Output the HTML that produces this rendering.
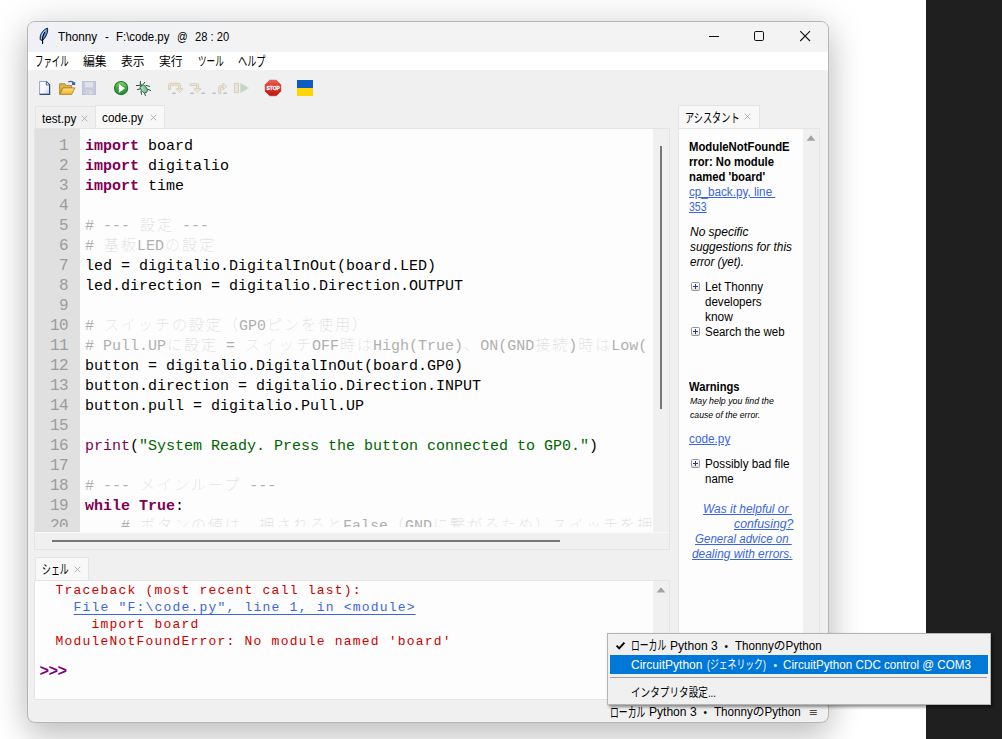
<!DOCTYPE html>
<html lang="ja">
<head>
<meta charset="utf-8">
<title>Thonny - F:\code.py @ 28 : 20</title>
<style>
html,body{margin:0;padding:0;}
body{width:1002px;height:739px;overflow:hidden;background:#fff;position:relative;
  font-family:"Liberation Sans","Noto Sans CJK JP",sans-serif;font-size:12px;color:#000;}
div,span,svg{position:absolute;}
span{white-space:pre;transform-origin:0 0;line-height:16px;}
span span,span i,span b{position:static;}
.dark{left:926px;top:0;width:76px;height:739px;background:#1f1f1f;}
.win{left:27px;top:21px;width:802px;height:702px;box-sizing:border-box;border:1px solid #b6b6b6;border-radius:8px;background:#f0f0f0;
  box-shadow:0 16px 30px rgba(0,0,0,.16),0 1px 38px rgba(0,0,0,.15);}
.title{left:28px;top:22px;width:800px;height:30px;border-radius:7px 7px 0 0;background:linear-gradient(90deg,#eff1f6,#f3f3f3 32%);}
.menu{left:28px;top:52px;width:800px;height:18px;background:#fff;}
.mono{font-family:"Liberation Mono","Noto Sans CJK JP",monospace;}
.c{font-family:"Liberation Mono","Noto Sans CJK JP",monospace;font-size:15px;line-height:20px;color:#000;}
.ln{font-family:"Liberation Mono",monospace;font-size:16px;letter-spacing:-0.6px;line-height:20px;width:33px;text-align:right;color:#9c9c9c;}
.kw{color:#7f0055;font-weight:bold;}
.bi{color:#7f0055;}
.str{color:#006400;}
.cm{color:#b0b0b0;}
.cj{color:#d9d9d9;font-weight:100;font-size:15px;letter-spacing:2px;padding-left:1px;margin-right:-1px;}
.s{font-family:"Liberation Mono",monospace;font-size:13px;letter-spacing:1.2px;line-height:17px;color:#cc0000;}
.s .lnk{text-underline-offset:3px;text-decoration-thickness:1px;}
.lnk{color:#3a66dd;text-decoration:underline;}
.i{font-style:italic;}
.b{font-weight:bold;}
</style>
</head>
<body>
<div class="dark"></div>
<div class="win"></div>
<div class="title"></div>
<div class="menu"></div>
<svg style="left:38px;top:27px" width="13" height="18" viewBox="0 0 13 18">
<path d="M9.3 1.1 C6.4 2.2 3.2 5.6 2.4 8.6 L2.1 12.5 L4.2 13.7 C6.4 12 8.6 8.4 9.4 5.4 C9.8 3.8 9.8 2.2 9.3 1.1 Z" fill="#4f92e8" stroke="#1a1f2c" stroke-width="1" stroke-linejoin="round"/>
<path d="M8.4 2.2 C6.2 3.4 3.6 6.4 3.1 8.8 L2.9 12 L4.4 12.2 L4.9 9.6 C5.6 7.2 7 4.6 8.4 2.2 Z" fill="#9ccafa"/>
<path d="M4.6 16.4 V10.4 C5 8.6 5.8 7 6.6 5.6" stroke="#000" stroke-width="1.1" fill="none" stroke-linecap="round"/>
</svg>
<svg style="left:700px;top:26px" width="120" height="20" viewBox="0 0 120 20" fill="none" stroke="#111" stroke-width="1">
<path d="M9 10.5 H19"/>
<rect x="54.5" y="5.5" width="9" height="9" rx="1.3"/>
<path d="M100.2 5.2 L110 15 M110 5.2 L100.2 15" stroke-width="1.1"/>
</svg>
<svg style="left:28px;top:74px" width="300" height="28" viewBox="28 74 300 28">
<defs>
<linearGradient id="gNew" x1="0" y1="0" x2="1" y2="1"><stop offset="0" stop-color="#ffffff"/><stop offset=".55" stop-color="#f6f8fd"/><stop offset="1" stop-color="#b9c8e6"/></linearGradient>
<linearGradient id="gFold" x1="0" y1="0" x2="0" y2="1"><stop offset="0" stop-color="#fde486"/><stop offset="1" stop-color="#efb02a"/></linearGradient>
<linearGradient id="gRun" x1="0" y1="0" x2="0" y2="1"><stop offset="0" stop-color="#8ed468"/><stop offset=".5" stop-color="#3fa045"/><stop offset="1" stop-color="#2c8f3a"/></linearGradient>
<linearGradient id="gBug" x1="0" y1="0" x2="1" y2="1"><stop offset="0" stop-color="#d2ecc8"/><stop offset="1" stop-color="#6aac66"/></linearGradient>
<linearGradient id="gStop" x1="0" y1="0" x2="0" y2="1"><stop offset="0" stop-color="#f0625a"/><stop offset=".5" stop-color="#d9281e"/><stop offset="1" stop-color="#c01a12"/></linearGradient>
</defs>
<!-- new -->
<path d="M39.6 81.5 H46.4 L49.6 84.7 V94.4 H39.6 Z" fill="url(#gNew)" stroke="#7f9bd0" stroke-width="0.9"/>
<path d="M46.4 81.6 L49.6 84.8 V94.4 H39.8" fill="none" stroke="#2c4877" stroke-width="1.2"/>
<path d="M46.3 81.8 V85 H49.4" fill="#e9eefa" stroke="#2c4877" stroke-width="0.8"/>
<!-- open -->
<path d="M59.6 94.3 V83.8 H65 L66.2 85.4 H71.6 V88.2 H62.4 Z" fill="#e3b347" stroke="#a98330" stroke-width="0.9"/>
<path d="M60 94.4 L63 87.9 H74.9 L71.6 94.4 Z" fill="url(#gFold)" stroke="#b08428" stroke-width="0.9"/>
<path d="M68.2 82 C69.8 81.2 72.2 81.2 73.6 82.6" fill="none" stroke="#3b64a8" stroke-width="1.2"/>
<path d="M72 82.2 H75.2 V85 H72 Z" fill="#3b64a8"/>
<!-- save (disabled) -->
<rect x="82.5" y="81.5" width="13" height="13" fill="#c7c9e0" stroke="#bfc1da" stroke-width="1"/>
<rect x="85" y="82.2" width="8" height="5.2" fill="#e2e2e6"/>
<rect x="86" y="90.4" width="6.4" height="4" fill="#d9dae6"/>
<rect x="87" y="91.2" width="2" height="2.4" fill="#c0c2d8"/>
<!-- run -->
<circle cx="121.1" cy="88.05" r="6.6" fill="url(#gRun)" stroke="#1d7a33" stroke-width="1.1"/>
<path d="M118.9 83.9 L125 88.3 L118.9 92.8 Z" fill="#fff"/>
<!-- debug bug -->
<g stroke="#23533a" stroke-width="1" fill="none" stroke-linecap="round">
<path d="M140.3 84.6 L140.4 81.4 M143.4 84.2 L144.6 82.4 M139.6 85.5 H136.4 M140.6 88.7 L137.4 89.6 M146 85.4 L149.5 86.4 M147.8 89.2 L150.7 90.6 M141 91.2 L141.5 94.3 M144.4 93 L145.4 95.5"/>
</g>
<ellipse cx="143.8" cy="88.9" rx="2.9" ry="4.5" transform="rotate(-38 143.8 88.9)" fill="url(#gBug)" stroke="#1f6a7a" stroke-width="0.9"/>
<circle cx="140.9" cy="85.4" r="1.2" fill="#4a9a58" stroke="#1f6a7a" stroke-width="0.6"/>
<!-- step icons -->
<g fill="none" stroke-linecap="round" stroke-linejoin="round">
<g stroke="#d7ccb3" stroke-width="3">
<path d="M169.5 88.8 V86.4 C169.5 85 170.4 84.3 171.6 84.3 H177.2 C178.8 84.3 179.6 85.2 179.6 86.6 V89"/>
<path d="M191 84.4 H196 C197.2 84.4 197.6 85 197.6 86.2 V89"/>
<path d="M219.8 92.4 V88 C219.8 86.9 220.4 86.4 221.4 86.4 H223.6"/>
</g>
<g stroke="#ece8dd" stroke-width="1.1">
<path d="M169.5 88.8 V86.4 C169.5 85 170.4 84.3 171.6 84.3 H177.2 C178.8 84.3 179.6 85.2 179.6 86.6 V89"/>
<path d="M191 84.4 H196 C197.2 84.4 197.6 85 197.6 86.2 V89"/>
<path d="M219.8 92.4 V88 C219.8 86.9 220.4 86.4 221.4 86.4 H223.6"/>
</g>
</g>
<g fill="#ece8dd" stroke="#d7ccb3" stroke-width="0.9" stroke-linejoin="round">
<path d="M176.2 88.8 H183 L179.6 92.6 Z"/>
<path d="M194 88.8 H201 L197.5 92.6 Z"/>
<path d="M223 83 L226.8 86.4 L223 89.8 Z"/>
</g>
<g fill="#b9c0cc">
<path d="M171.8 94 a2.1 1.8 0 0 1 4.2 0 Z"/>
<path d="M190 94 a2.1 1.8 0 0 1 4.2 0 Z M201 94 a2.1 1.8 0 0 1 4.2 0 Z"/>
<path d="M212 94 a2.1 1.8 0 0 1 4.2 0 Z M223 94 a2.1 1.8 0 0 1 4.2 0 Z"/>
</g>
<!-- resume -->
<rect x="234.4" y="83.4" width="4" height="9.2" fill="#e9e4d6" stroke="#d7ccb3" stroke-width="0.9"/>
<path d="M240.3 83 L249.2 88 L240.3 93 Z" fill="#c4d6c6"/>
<!-- stop -->
<path d="M269.7 80.2 H276.3 L280.8 84.7 V91.3 L276.3 95.8 H269.7 L265.2 91.3 V84.7 Z" fill="url(#gStop)" stroke="#b01c14" stroke-width="0.5"/>
<text x="273.1" y="90.1" font-family="Liberation Sans, sans-serif" font-weight="bold" font-size="6" fill="#fff" stroke="#fff" stroke-width="0.35" text-anchor="middle" textLength="13.4" lengthAdjust="spacingAndGlyphs">STOP</text>
<!-- flag -->
<rect x="297" y="80" width="16" height="8" fill="#0f5bc4"/>
<rect x="297" y="88" width="16" height="8" fill="#ffd500"/>
</svg>
<div style="left:35px;top:106px;width:61px;height:23px;background:#f0f0f0;box-sizing:border-box;border:1px solid #e4e4e4;border-bottom:none;"></div>
<div style="left:95px;top:105px;width:70px;height:24px;background:#f8f8f8;box-sizing:border-box;border:1px solid #e4e4e4;border-bottom:none;"></div>
<svg style="left:81px;top:115px" width="8" height="8" viewBox="0 0 8 8"><path d="M0.7 0.7 L6.3 6.3 M6.3 0.7 L0.7 6.3" stroke="#a4a4a4" stroke-width="0.85" fill="none"/></svg>
<svg style="left:150px;top:114px" width="8" height="8" viewBox="0 0 8 8"><path d="M0.7 0.7 L6.3 6.3 M6.3 0.7 L0.7 6.3" stroke="#a4a4a4" stroke-width="0.85" fill="none"/></svg>
<div style="left:34px;top:128px;width:636px;height:422px;background:#f0f0f0;box-sizing:border-box;border:1px solid #e4e4e4;"></div>
<div style="left:35px;top:129px;width:45px;height:403px;background:#e0e0e0;"></div>
<div style="left:80px;top:129px;width:573px;height:403px;background:#fdfdfd;"></div>
<div style="left:653px;top:129px;width:16px;height:403px;background:#f0f0f0;"></div>
<div style="left:660px;top:146px;width:2px;height:263px;background:#767676;"></div>
<div style="left:35px;top:532px;width:634px;height:1px;background:#fafafa;"></div>
<div style="left:52px;top:540px;width:508px;height:2px;background:#767676;"></div>
<div style="left:35px;top:557px;width:54px;height:24px;background:#f8f8f8;box-sizing:border-box;border:1px solid #e4e4e4;border-bottom:none;"></div>
<svg style="left:74px;top:566px" width="8" height="8" viewBox="0 0 8 8"><path d="M0.7 0.7 L6.3 6.3 M6.3 0.7 L0.7 6.3" stroke="#a4a4a4" stroke-width="0.85" fill="none"/></svg>
<div style="left:34px;top:580px;width:636px;height:120px;background:#f0f0f0;box-sizing:border-box;border:1px solid #e4e4e4;"></div>
<div style="left:35px;top:581px;width:618px;height:118px;background:#fdfdfd;"></div>
<svg style="left:655px;top:585px" width="12" height="10" viewBox="0 0 12 10"><path d="M1.6 7.6 L6 2.2 L10.4 7.6 Z" fill="#a3a3a3"/></svg>
<div style="left:678px;top:105px;width:82px;height:24px;background:#f8f8f8;box-sizing:border-box;border:1px solid #e4e4e4;border-bottom:none;"></div>
<svg style="left:744.4px;top:113.4px" width="8" height="8" viewBox="0 0 8 8"><path d="M0.7 0.7 L6.3 6.3 M6.3 0.7 L0.7 6.3" stroke="#a4a4a4" stroke-width="0.85" fill="none"/></svg>
<div style="left:678px;top:128px;width:142px;height:572px;background:#f0f0f0;box-sizing:border-box;border:1px solid #e4e4e4;"></div>
<div style="left:679px;top:129px;width:124px;height:570px;background:#fdfdfd;"></div>
<svg style="left:805px;top:133px" width="12" height="10" viewBox="0 0 12 10"><path d="M1.6 7.8 L6 2.2 L10.4 7.8 Z" fill="#a3a3a3"/></svg>
<svg style="left:691px;top:282px" width="9" height="9" viewBox="0 0 9 9"><defs><linearGradient id="pg282" x1="0" y1="0" x2="0" y2="1"><stop offset="0" stop-color="#ffffff"/><stop offset=".6" stop-color="#f4f4f4"/><stop offset="1" stop-color="#d4d4d4"/></linearGradient></defs><rect x="0.5" y="0.5" width="8" height="8" rx="1" fill="url(#pg282)" stroke="#969696"/><path d="M2 4.5 H7 M4.5 2 V7" stroke="#26368e" stroke-width="1"/></svg>
<svg style="left:691px;top:327px" width="9" height="9" viewBox="0 0 9 9"><defs><linearGradient id="pg327" x1="0" y1="0" x2="0" y2="1"><stop offset="0" stop-color="#ffffff"/><stop offset=".6" stop-color="#f4f4f4"/><stop offset="1" stop-color="#d4d4d4"/></linearGradient></defs><rect x="0.5" y="0.5" width="8" height="8" rx="1" fill="url(#pg327)" stroke="#969696"/><path d="M2 4.5 H7 M4.5 2 V7" stroke="#26368e" stroke-width="1"/></svg>
<svg style="left:691px;top:459px" width="9" height="9" viewBox="0 0 9 9"><defs><linearGradient id="pg459" x1="0" y1="0" x2="0" y2="1"><stop offset="0" stop-color="#ffffff"/><stop offset=".6" stop-color="#f4f4f4"/><stop offset="1" stop-color="#d4d4d4"/></linearGradient></defs><rect x="0.5" y="0.5" width="8" height="8" rx="1" fill="url(#pg459)" stroke="#969696"/><path d="M2 4.5 H7 M4.5 2 V7" stroke="#26368e" stroke-width="1"/></svg>
<div style="left:607px;top:633px;width:384px;height:72px;background:#f0f0f0;box-sizing:border-box;border:1px solid #b4b4b4;box-shadow:2px 2px 3px rgba(0,0,0,.45);"></div>
<div style="left:610px;top:655px;width:378px;height:19px;background:#0078d7;"></div>
<div style="left:610px;top:677px;width:377px;height:1px;background:#a0a0a0;"></div>
<svg style="left:615px;top:641px" width="11" height="10" viewBox="0 0 11 10"><path d="M1.6 4.6 L4.2 7.4 L9.4 1.6" fill="none" stroke="#000" stroke-width="1.9"/></svg>
<span style="left:58.3px;font-size:12px;top:29px;transform:scaleX(0.9792);">Thonny</span>
<span style="left:105.2px;font-size:12px;top:29px;transform:scaleX(0.9500);">-</span>
<span style="left:116px;font-size:12px;top:29px;transform:scaleX(0.9530);">F:\code.py</span>
<span style="left:176.7px;font-size:12px;top:29px;transform:scaleX(0.8779);">@</span>
<span style="left:194.6px;font-size:12px;top:29px;transform:scaleX(0.9291);">28 : 20</span>
<span style="left:35px;font-size:13.2px;top:54px;transform:scaleX(0.6389);">ファイル</span>
<span style="left:83.1px;font-size:12px;top:54px;transform:scaleX(0.9869);">編集</span>
<span style="left:121.1px;font-size:12px;top:54px;transform:scaleX(0.9869);">表示</span>
<span style="left:159.2px;font-size:12px;top:54px;transform:scaleX(0.9827);">実行</span>
<span style="left:197.7px;font-size:13.2px;top:54px;transform:scaleX(0.6496);">ツール</span>
<span style="left:238.3px;font-size:13.2px;top:54px;transform:scaleX(0.6951);">ヘルプ</span>
<span style="left:42.3px;font-size:12px;top:111px;transform:scaleX(0.9729);">test.py</span>
<span style="left:102.3px;font-size:12px;top:110px;transform:scaleX(0.9802);">code.py</span>
<span style="left:42.3px;font-size:13.2px;top:562px;transform:scaleX(0.6749);">シェル</span>
<span class="s" style="left:55.6px;font-size:13px;top:582px;">Traceback (most recent call last):</span>
<span class="s" style="left:73.6px;font-size:13px;top:599px;"><span class="lnk">File "F:\code.py", line 1, in &lt;module&gt;</span></span>
<span class="s" style="left:91.6px;font-size:13px;top:616px;">import board</span>
<span class="s" style="left:55.6px;font-size:13px;top:633px;">ModuleNotFoundError: No module named 'board'</span>
<span class="s" style="left:39.6px;font-size:16px;color:#7f007f;font-weight:bold;letter-spacing:-0.6px;top:664px;">&gt;&gt;&gt;</span>
<span style="left:685.2px;font-size:12.6px;top:110px;transform:scaleX(0.7274);">アシスタント</span>
<span class="b" style="left:689.4px;font-size:12px;top:139px;transform:scaleX(0.9434);">ModuleNotFoundE</span>
<span class="b" style="left:689.4px;font-size:12px;top:154px;transform:scaleX(0.9363);">rror: No module</span>
<span class="b" style="left:689.4px;font-size:12px;top:169px;transform:scaleX(0.9400);">named 'board'</span>
<span class="lnk" style="left:689.4px;font-size:12px;top:184px;transform:scaleX(0.9763);">cp_back.py, line </span>
<span class="lnk" style="left:689.4px;font-size:12px;top:199px;transform:scaleX(0.8786);">353</span>
<span class="i" style="left:690px;font-size:12px;top:224px;transform:scaleX(0.9968);">No specific</span>
<span class="i" style="left:690px;font-size:12px;top:239px;transform:scaleX(0.9865);">suggestions for this</span>
<span class="i" style="left:690px;font-size:12px;top:254px;transform:scaleX(0.9622);">error (yet).</span>
<span style="left:705.4px;font-size:12px;top:279px;transform:scaleX(0.9694);">Let Thonny</span>
<span style="left:705.4px;font-size:12px;top:294px;transform:scaleX(0.9639);">developers</span>
<span style="left:705.4px;font-size:12px;top:309px;transform:scaleX(0.9959);">know</span>
<span style="left:705.4px;font-size:12px;top:324px;transform:scaleX(0.9533);">Search the web</span>
<span class="b" style="left:689.4px;font-size:12px;top:379px;transform:scaleX(0.9330);">Warnings</span>
<span class="i" style="left:689.6px;font-size:9px;top:393px;transform:scaleX(0.9794);">May help you find the</span>
<span class="i" style="left:689.6px;font-size:9px;top:407px;transform:scaleX(0.9656);">cause of the error.</span>
<span class="lnk" style="left:689.4px;font-size:12px;top:431px;transform:scaleX(0.9826);">code.py</span>
<span style="left:705.4px;font-size:12px;top:456px;transform:scaleX(0.9744);">Possibly bad file</span>
<span style="left:705.4px;font-size:12px;top:471px;transform:scaleX(0.9557);">name</span>
<span class="i lnk" style="left:703.2px;font-size:12px;top:501px;transform:scaleX(0.9960);">Was it helpful or </span>
<span class="i lnk" style="left:734.1px;font-size:12px;top:516px;transform:scaleX(1.0233);">confusing?</span>
<span class="i lnk" style="left:695.2px;font-size:12px;top:531px;transform:scaleX(0.9609);">General advice on </span>
<span class="i lnk" style="left:691.5px;font-size:12px;top:546px;transform:scaleX(0.9912);">dealing with errors.</span>
<span style="left:610.3px;font-size:13.2px;top:705px;transform:scaleX(0.6692);">ローカル</span>
<span style="left:649.4px;font-size:12px;top:704px;transform:scaleX(1.0047);">Python 3</span>
<span style="left:703.4px;font-size:10px;top:705px;">•</span>
<span style="left:713.8px;font-size:12px;top:704px;transform:scaleX(0.9710);">ThonnyのPython</span>
<span style="left:808.8px;font-size:11px;color:#222;top:704px;transform:scaleX(1.3080);">≡</span>
<span style="left:631.3px;font-size:13.2px;top:638px;transform:scaleX(0.6673);">ローカル</span>
<span style="left:670.3px;font-size:12px;top:638px;transform:scaleX(1.0069);">Python 3</span>
<span style="left:724.4px;font-size:10px;top:639px;">•</span>
<span style="left:734.8px;font-size:12px;top:638px;transform:scaleX(0.9710);">ThonnyのPython</span>
<span style="left:631.3px;font-size:12px;color:#fff;top:657px;transform:scaleX(1.0018);">CircuitPython</span>
<span style="left:706.8px;font-size:12px;color:#fff;top:657px;transform:scaleX(0.7363);">(ジェネリック)</span>
<span style="left:773.4px;font-size:10px;color:#fff;top:658px;">•</span>
<span style="left:783.2px;font-size:12px;color:#fff;top:657px;transform:scaleX(0.9712);">CircuitPython CDC control @ COM3</span>
<span style="left:631.3px;font-size:12px;top:685px;transform:scaleX(0.8008);">インタプリタ設定...</span>
<div style="left:35px;top:129px;width:45px;height:398px;overflow:hidden">
<span class="ln" style="left:0px;font-size:16px;top:7px;">1</span>
<span class="ln" style="left:0px;font-size:16px;top:27px;">2</span>
<span class="ln" style="left:0px;font-size:16px;top:47px;">3</span>
<span class="ln" style="left:0px;font-size:16px;top:67px;">4</span>
<span class="ln" style="left:0px;font-size:16px;top:87px;">5</span>
<span class="ln" style="left:0px;font-size:16px;top:107px;">6</span>
<span class="ln" style="left:0px;font-size:16px;top:127px;">7</span>
<span class="ln" style="left:0px;font-size:16px;top:147px;">8</span>
<span class="ln" style="left:0px;font-size:16px;top:167px;">9</span>
<span class="ln" style="left:0px;font-size:16px;top:187px;">10</span>
<span class="ln" style="left:0px;font-size:16px;top:207px;">11</span>
<span class="ln" style="left:0px;font-size:16px;top:227px;">12</span>
<span class="ln" style="left:0px;font-size:16px;top:247px;">13</span>
<span class="ln" style="left:0px;font-size:16px;top:267px;">14</span>
<span class="ln" style="left:0px;font-size:16px;top:287px;">15</span>
<span class="ln" style="left:0px;font-size:16px;top:307px;">16</span>
<span class="ln" style="left:0px;font-size:16px;top:327px;">17</span>
<span class="ln" style="left:0px;font-size:16px;top:347px;">18</span>
<span class="ln" style="left:0px;font-size:16px;top:367px;">19</span>
<span class="ln" style="left:0px;font-size:16px;top:387px;">20</span>
</div>
<div style="left:80px;top:129px;width:573px;height:398px;overflow:hidden">
<span class="c" style="left:5px;font-size:15px;top:8px;"><span class="kw">import</span> board</span>
<span class="c" style="left:5px;font-size:15px;top:28px;"><span class="kw">import</span> digitalio</span>
<span class="c" style="left:5px;font-size:15px;top:48px;"><span class="kw">import</span> time</span>
<span class="c" style="left:5px;font-size:15px;top:68px;"></span>
<span class="c" style="left:5px;font-size:15px;top:88px;"><span class="cm"># --- <span class="cj">設定</span> ---</span></span>
<span class="c" style="left:5px;font-size:15px;top:108px;"><span class="cm"># <span class="cj">基板</span>LED<span class="cj">の設定</span></span></span>
<span class="c" style="left:5px;font-size:15px;top:128px;">led = digitalio.DigitalInOut(board.LED)</span>
<span class="c" style="left:5px;font-size:15px;top:148px;">led.direction = digitalio.Direction.OUTPUT</span>
<span class="c" style="left:5px;font-size:15px;top:168px;"></span>
<span class="c" style="left:5px;font-size:15px;top:188px;"><span class="cm"># <span class="cj">スイッチの設定（</span>GP0<span class="cj">ピンを使用）</span></span></span>
<span class="c" style="left:5px;font-size:15px;top:208px;"><span class="cm"># Pull.UP<span class="cj">に設定</span> = <span class="cj">スイッチ</span>OFF<span class="cj">時は</span>High(True)<span class="cj">、</span>ON(GND<span class="cj">接続</span>)<span class="cj">時は</span>Low(</span></span>
<span class="c" style="left:5px;font-size:15px;top:228px;">button = digitalio.DigitalInOut(board.GP0)</span>
<span class="c" style="left:5px;font-size:15px;top:248px;">button.direction = digitalio.Direction.INPUT</span>
<span class="c" style="left:5px;font-size:15px;top:268px;">button.pull = digitalio.Pull.UP</span>
<span class="c" style="left:5px;font-size:15px;top:288px;"></span>
<span class="c" style="left:5px;font-size:15px;top:308px;"><span class="bi">print</span>(<span class="str">"System Ready. Press the button connected to GP0."</span>)</span>
<span class="c" style="left:5px;font-size:15px;top:328px;"></span>
<span class="c" style="left:5px;font-size:15px;top:348px;"><span class="cm"># --- <span class="cj">メインループ</span> ---</span></span>
<span class="c" style="left:5px;font-size:15px;top:368px;"><span class="kw">while</span> <span class="kw">True</span>:</span>
<span class="c" style="left:5px;font-size:15px;top:388px;">    <span class="cm"># <span class="cj">ボタンの値は、押されると</span>False<span class="cj">（</span>GND<span class="cj">に繋がるため）スイッチを押した</span></span></span>
</div>
</body>
</html>
